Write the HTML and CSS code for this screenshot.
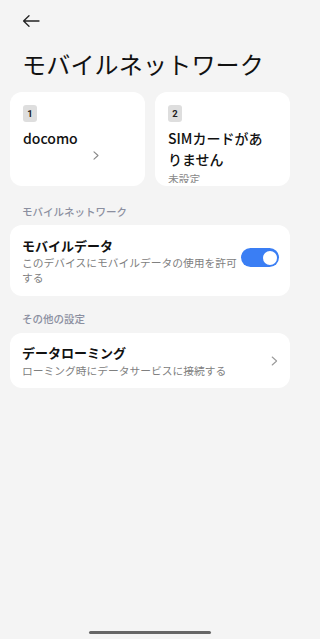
FILE: index.html
```html
<!DOCTYPE html>
<html lang="ja">
<head>
<meta charset="utf-8">
<title>モバイルネットワーク</title>
<link rel="stylesheet" href="styles.css">
</head>
<body>
<div class="screen">
  <header class="topbar">
    <svg class="back" width="18" height="12" viewBox="0 0 18 12" aria-hidden="true">
      <path d="M17 6H1.6M7 0.7L1.6 6L7 11.3" fill="none" stroke="#222" stroke-width="1.3" stroke-linecap="round" stroke-linejoin="round"/>
    </svg>
  </header>
  <h1 class="title">モバイルネットワーク</h1>

  <div class="sims">
    <div class="sim">
      <div class="sim-inner">
        <span class="badge">1</span>
        <div class="sim-name">docomo</div>
        <svg class="sim-chev" width="6" height="9" viewBox="0 0 6 9" aria-hidden="true">
          <path d="M1 0.8L5 4.5L1 8.2" fill="none" stroke="#888" stroke-width="1.1" stroke-linecap="round" stroke-linejoin="round"/>
        </svg>
      </div>
    </div>
    <div class="sim">
      <div class="sim-inner">
        <span class="badge">2</span>
        <div class="sim-name">SIMカードがありません</div>
        <div class="sim-sub">未設定</div>
      </div>
    </div>
  </div>

  <div class="sec-label first">モバイルネットワーク</div>
  <div class="card data-card">
    <div class="row-text">
      <div class="row-title">モバイルデータ</div>
      <div class="row-sub">このデバイスにモバイルデータの使用を許可する</div>
    </div>
    <div class="toggle"><span class="knob"></span></div>
  </div>

  <div class="sec-label">その他の設定</div>
  <div class="card roam-card">
    <div class="row-text">
      <div class="row-title">データローミング</div>
      <div class="row-sub">ローミング時にデータサービスに接続する</div>
    </div>
    <svg class="chev" width="7" height="10" viewBox="0 0 7 10" aria-hidden="true">
      <path d="M1.2 1L5.6 5L1.2 9" fill="none" stroke="#9a9a9a" stroke-width="1.1" stroke-linecap="round" stroke-linejoin="round"/>
    </svg>
  </div>

  <div class="navpill"></div>
</div>
</body>
</html>
```

FILE: styles.css
```css
* { box-sizing: border-box; }
html, body {
  margin: 0;
  padding: 0;
  background: #f4f4f4;
}
body {
  font-family: "Noto Sans CJK JP", "Noto Sans", "Liberation Sans", sans-serif;
  color: #111;
}
.screen {
  width: 300px;
  height: 639px;
  display: flex;
  flex-direction: column;
  overflow: hidden;
}
.topbar {
  padding: 15px 22px 0;
  height: 27px;
}
.back { display: block; }
.title {
  margin: 21px 0 12px;
  padding: 0 22px;
  font-size: 24px;
  line-height: 32px;
  font-weight: 400;
  color: #111;
  letter-spacing: 0.2px;
}
.sims {
  display: grid;
  grid-template-columns: 1fr 1fr;
  gap: 10px;
  padding: 0 10px;
}
.sim {
  background: #fff;
  border-radius: 12px;
  height: 94px;
  padding: 13px 17px 4px 13px;
}
.sim-inner {
  height: 78px;
  overflow: hidden;
}
.badge {
  display: flex;
  align-items: center;
  justify-content: center;
  width: 14px;
  height: 17px;
  border-radius: 3px;
  background: #dedede;
  font-family: "Roboto", "Noto Sans", sans-serif;
  font-size: 9.5px;
  font-weight: 700;
  color: #222;
}
.sim-name {
  margin-top: 6px;
  font-size: 14px;
  line-height: 21px;
  font-weight: 500;
  color: #111;
}
.sim-chev {
  display: block;
  margin: 2px 0 0 70px;
}
.sim-sub {
  margin-top: 1px;
  font-size: 10.75px;
  line-height: 15px;
  color: #888;
}
.sec-label {
  padding: 0 22px;
  margin: 15px 0 6px;
  font-size: 10.5px;
  line-height: 16px;
  font-weight: 500;
  color: #8b8fa0;
}
.sec-label.first {
  margin: 18px 0 5px;
}
.card {
  margin: 0 10px;
  background: #fff;
  border-radius: 12px;
  display: flex;
  padding: 0 11px 0 12px;
}
.data-card {
  padding-top: 12px;
  padding-bottom: 10.5px;
  align-items: flex-start;
  gap: 3px;
}
.roam-card {
  padding-top: 11px;
  padding-bottom: 10px;
  align-items: center;
  padding-right: 12px;
}
.row-text {
  flex: 1;
  min-width: 0;
}
.row-title {
  font-size: 13px;
  line-height: 18px;
  font-weight: 600;
  color: #111;
}
.row-sub {
  font-size: 10.75px;
  line-height: 15px;
  color: #808080;
}
.roam-card .row-sub { margin-top: 1px; }
.toggle {
  flex: none;
  width: 38px;
  height: 19px;
  margin-top: 11px;
  border-radius: 10px;
  background: #3a7ef4;
  display: flex;
  align-items: center;
  justify-content: flex-end;
  padding-right: 2px;
}
.knob {
  width: 14px;
  height: 14px;
  border-radius: 50%;
  background: #fff;
}
.chev {
  flex: none;
  display: block;
}
.navpill {
  margin: auto auto 5px;
  width: 122px;
  height: 3px;
  border-radius: 2px;
  background: #666;
}
```
